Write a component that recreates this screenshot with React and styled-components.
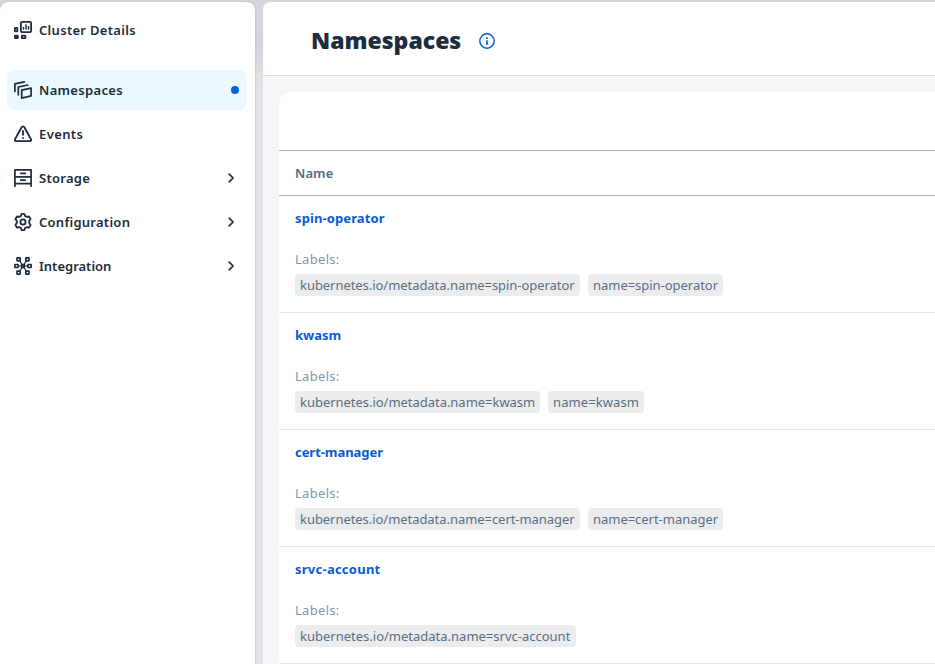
import React from "react";
import styled, { createGlobalStyle } from "styled-components";

const GlobalStyle = createGlobalStyle`
  * { box-sizing: border-box; }
  html, body { margin: 0; padding: 0; }
  body {
    height: 664px;
    overflow: hidden;
    background: #e1e2e5;
    font-family: "Noto Sans", "Liberation Sans", sans-serif;
    font-size: 13px;
    color: #1d2d3e;
  }
`;

const Shell = styled.div`
  display: grid;
  grid-template-columns: 255px minmax(0, 1fr);
  column-gap: 8px;
  height: 664px;
  padding-top: 2px;
  overflow: hidden;
  background: linear-gradient(#d5d7db 0, #d3d6dc 45px, #e1e2e5 85px);
`;

const Sidebar = styled.nav`
  display: flex;
  flex-direction: column;
  gap: 4px;
  padding: 8px 8px 0 7px;
  border-radius: 8px 8px 0 0;
  background: #fff;
  box-shadow: 0 0 2px rgba(34, 53, 72, 0.28);
`;

const NavItem = styled.a`
  display: flex;
  align-items: center;
  height: 40px;
  flex: none;
  padding: 0 7px;
  margin-bottom: ${(p) => (p.$first ? "16px" : "0")};
  border-radius: 8px;
  background: ${(p) => (p.$active ? "#ebf8ff" : "transparent")};
  font-weight: 600;
  white-space: nowrap;

  svg { display: block; flex: none; }
`;

const NavLabel = styled.span`
  flex: 1;
  margin-left: 7px;
  letter-spacing: ${(p) => p.$tracking}px;
`;

const ActiveDot = styled.span`
  width: 8px;
  height: 8px;
  margin-right: 1px;
  border-radius: 50%;
  background: #0064d9;
`;

const Main = styled.main`
  display: flex;
  flex-direction: column;
  overflow: hidden;
  border-radius: 8px 0 0 0;
  background: #f5f6f7;
`;

const Header = styled.header`
  display: flex;
  align-items: center;
  gap: 18px;
  height: 74px;
  flex: none;
  padding: 4px 0 0 48px;
  border-bottom: 1px solid #d9dbdf;
  background: #fff;

  svg { display: block; }
`;

const Title = styled.h1`
  margin: 0 0 2px;
  width: 150px;
  font-size: 23px;
  line-height: 32px;
  font-weight: 900;
  white-space: nowrap;
`;

const Card = styled.section`
  flex: 1;
  margin: 16px 0 0 16px;
  padding-top: 58px;
  border-radius: 12px 0 0 0;
  background: #fff;
`;

const ColumnHead = styled.div`
  height: 46px;
  padding: 0 16px;
  border-top: 1px solid #a8b2bd;
  border-bottom: 1px solid #a8b2bd;
  color: #556b82;
  font-weight: 600;
  line-height: 45px;
  letter-spacing: 0.1px;
`;

const Row = styled.article`
  height: 117px;
  padding: 12px 16px 0;
  border-bottom: 1px solid #e5e5e5;
  white-space: nowrap;
`;

const NameLink = styled.a`
  display: block;
  height: 20px;
  line-height: 20px;
  color: #0a5bd8;
  font-weight: 700;
  letter-spacing: ${(p) => p.$tracking}px;
`;

const LabelsCaption = styled.div`
  height: 20px;
  margin-top: 21px;
  line-height: 20px;
  color: #8396a8;
  letter-spacing: 0.3px;
`;

const Chips = styled.div`
  display: flex;
  gap: 8px;
  margin-top: 5px;
`;

const Chip = styled.span`
  width: ${(p) => p.$width}px;
  height: 22px;
  padding-left: 5px;
  border-radius: 4px;
  background: #eaecee;
  color: #5b6e82;
  line-height: 22px;
  letter-spacing: ${(p) => p.$tracking}px;
`;

const strokeProps = { fill: "none", stroke: "#1d2d3e", strokeWidth: 1.6, strokeLinejoin: "round", strokeLinecap: "round" };

const ClusterIcon = () => (
  <svg width="18" height="18" viewBox="0 0 18 18" {...strokeProps} strokeWidth="1.8">
    <rect x="6.9" y="0.9" width="10.2" height="10.2" rx="1" />
    <path d="M9.5 8V6.5M12 8V4M14.5 8V5.7" strokeWidth="1.5" />
    <rect x="0.9" y="6.9" width="2.4" height="3.4" rx="0.3" />
    <rect x="0.9" y="14.6" width="2.9" height="2.5" rx="0.3" fill="#1d2d3e" />
    <rect x="7.8" y="14.6" width="3.6" height="2.5" rx="0.3" />
  </svg>
);

const NamespacesIcon = () => (
  <svg width="18" height="18" viewBox="0 0 18 18" {...strokeProps} strokeWidth="1.7">
    <path d="M0.9 10.5V2.8L10.3 0.9" />
    <path d="M4.3 13.8V6L13.8 4" />
    <path d="M7.7 9.2L17.1 7.2V14.9L7.7 17.1Z" />
  </svg>
);

const EventsIcon = () => (
  <svg width="18" height="18" viewBox="0 0 18 18" {...strokeProps} strokeWidth="1.8">
    <path d="M7.8 2Q9 0.6 10.2 2L17 14.3Q17.5 16 16 16.2H2Q0.5 16 1 14.3Z" />
    <path d="M9 5.9V9.8M9 12.8V13" strokeWidth="1.8" />
  </svg>
);

const StorageIcon = () => (
  <svg width="18" height="18" viewBox="0 0 18 18" {...strokeProps} strokeWidth="1.7">
    <path d="M0.9 17.2V0.9H17.1V17.2M0.9 7.8H17.1M0.9 14.7H17.1M6.8 4.4H11.2M6.8 11.2H11.2" />
  </svg>
);

const GearIcon = () => (
  <svg width="18" height="18" viewBox="0 0 18 18" {...strokeProps} strokeWidth="1.8">
    <path d="M7.7 0.9H10.3L11.2 3.1L12.5 3.8L15 3.5L16.6 6L15.2 8V10L16.6 12L15 14.5L12.5 14.2L11.2 14.9L10.3 17.1H7.7L6.8 14.9L5.5 14.2L3 14.5L1.4 12L2.8 10V8L1.4 6L3 3.5L5.5 3.8L6.8 3.1Z" />
    <circle cx="9" cy="9" r="2.6" />
  </svg>
);

const IntegrationIcon = () => (
  <svg width="18" height="18" viewBox="0 0 18 18" {...strokeProps} strokeWidth="1.7">
    <rect x="3" y="0.9" width="3.2" height="3" rx="0.3" />
    <rect x="11.8" y="0.9" width="3.2" height="3" rx="0.3" />
    <rect x="0.9" y="7.5" width="3.2" height="3" rx="0.3" />
    <rect x="7.6" y="7.6" width="2.8" height="2.8" rx="0.3" fill="#52606e" />
    <rect x="13.9" y="7.5" width="3.2" height="3" rx="0.3" />
    <rect x="3" y="14.1" width="3.2" height="3" rx="0.3" />
    <rect x="11.8" y="14.1" width="3.2" height="3" rx="0.3" />
    <path d="M6.2 4.6L7.8 7M11.8 4.6L10.2 7M4.8 9H7M11 9H13.2M7.8 11L6.2 13.4M10.2 11L11.8 13.4" strokeWidth="1.2" />
  </svg>
);

const ChevronIcon = () => (
  <svg width="18" height="18" viewBox="0 0 18 18" {...strokeProps} strokeWidth="1.7">
    <path d="M7.2 5.2L11.1 9L7.2 12.8" />
  </svg>
);

const InfoIcon = () => (
  <svg width="16" height="16" viewBox="0 0 16 16" fill="none" stroke="#0064d9" strokeWidth="1.5">
    <circle cx="8" cy="8" r="7.2" />
    <path d="M8 7.2V11.7M8 4.2V5.9" strokeWidth="1.7" />
  </svg>
);

const navItems = [
  { label: "Cluster Details", Icon: ClusterIcon, tracking: 0.3, first: true },
  { label: "Namespaces", Icon: NamespacesIcon, tracking: 0.32, active: true },
  { label: "Events", Icon: EventsIcon, tracking: 0.4 },
  { label: "Storage", Icon: StorageIcon, tracking: 0.27, expandable: true },
  { label: "Configuration", Icon: GearIcon, tracking: 0.26, expandable: true },
  { label: "Integration", Icon: IntegrationIcon, tracking: 0, expandable: true },
];

const namespaces = [
  { name: "spin-operator", tracking: 0.1, chips: [[285, -0.05], [135, -0.03]] },
  { name: "kwasm", tracking: 0, chips: [[245, -0.03], [96, 0.1]] },
  { name: "cert-manager", tracking: -0.05, chips: [[285, -0.05], [135, -0.03]] },
  { name: "srvc-account", tracking: 0.25, chips: [[281, 0]] },
];

const prefixes = ["kubernetes.io/metadata.name=", "name="];

export default function App() {
  return (
    <>
      <GlobalStyle />
      <Shell>
        <Sidebar>
          {navItems.map(({ label, Icon, tracking, first, active, expandable }) => (
            <NavItem key={label} $first={first} $active={active}>
              <Icon />
              <NavLabel $tracking={tracking}>{label}</NavLabel>
              {active && <ActiveDot />}
              {expandable && <ChevronIcon />}
            </NavItem>
          ))}
        </Sidebar>
        <Main>
          <Header>
            <Title>Namespaces</Title>
            <InfoIcon />
          </Header>
          <Card>
            <ColumnHead>Name</ColumnHead>
            {namespaces.map(({ name, tracking, chips }) => (
              <Row key={name}>
                <NameLink $tracking={tracking}>{name}</NameLink>
                <LabelsCaption>Labels:</LabelsCaption>
                <Chips>
                  {chips.map(([width, chipTracking], i) => (
                    <Chip key={prefixes[i]} $width={width} $tracking={chipTracking}>
                      {prefixes[i] + name}
                    </Chip>
                  ))}
                </Chips>
              </Row>
            ))}
          </Card>
        </Main>
      </Shell>
    </>
  );
}
